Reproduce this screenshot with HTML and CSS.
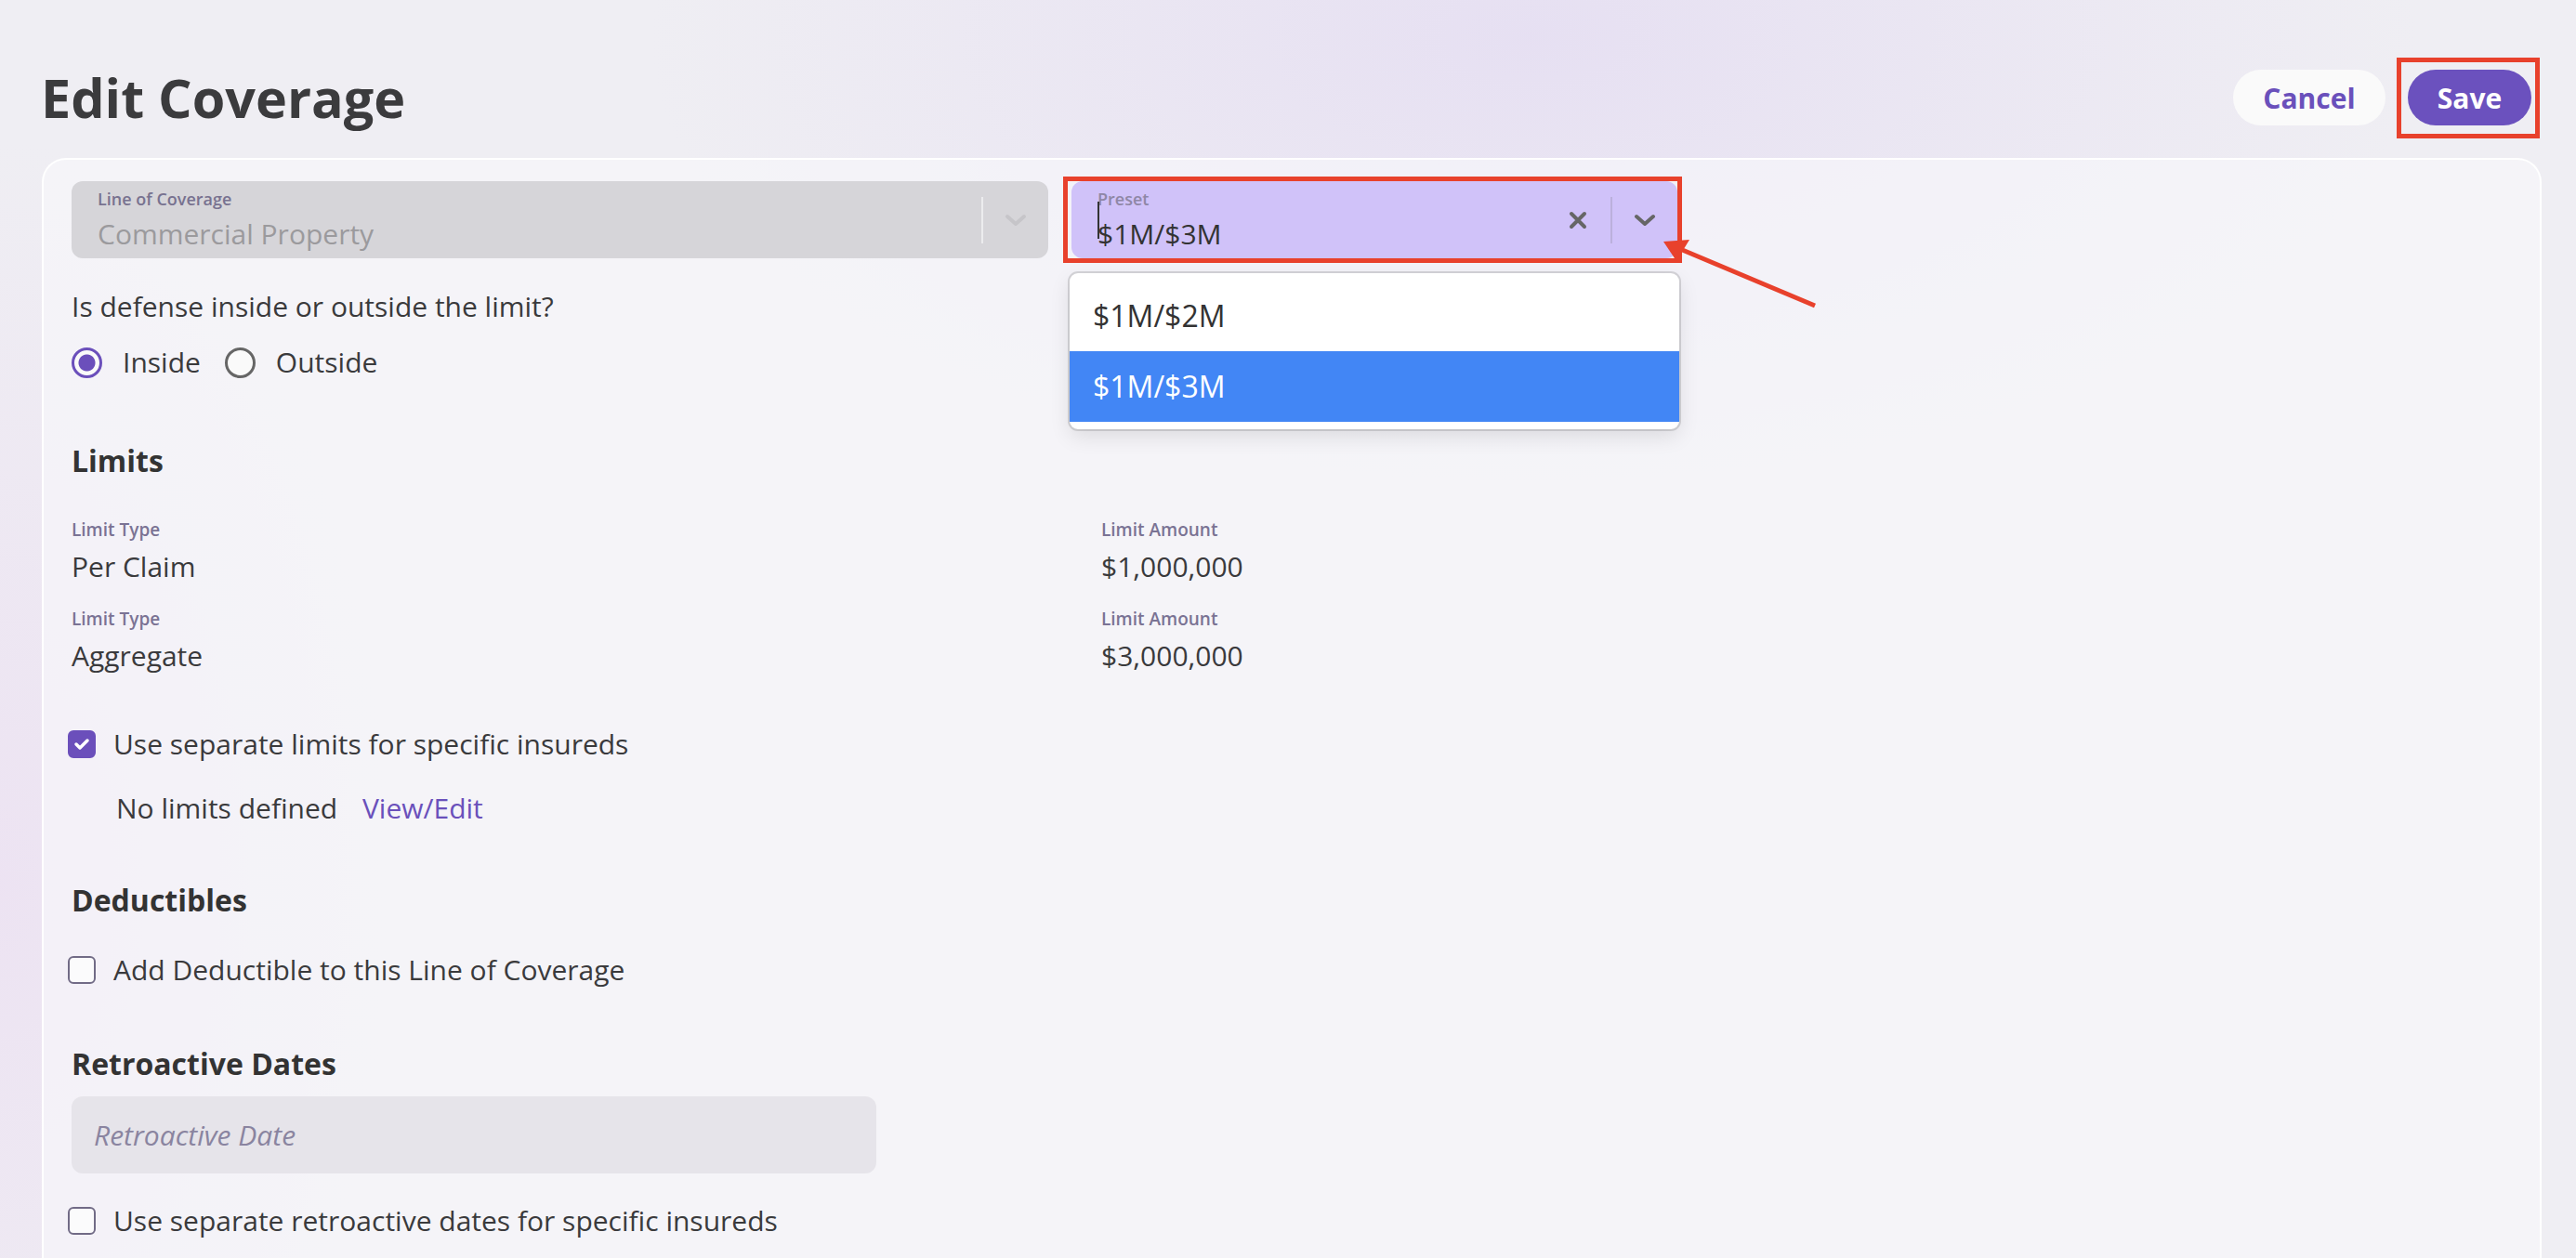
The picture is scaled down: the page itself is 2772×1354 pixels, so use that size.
FILE: index.html
```html
<!DOCTYPE html>
<html lang="en">

<head>
    <meta charset="UTF-8">
    <meta name="viewport" content="width=device-width, initial-scale=1.0">
    <title>Edit Coverage</title>
    <link rel="stylesheet" href="styles.css">
</head>

<body>
    <header class="page-head">
        <h1>Edit Coverage</h1>
        <div class="actions">
            <button class="btn btn-light">Cancel</button>
            <button class="btn btn-primary marked-save">Save</button>
        </div>
    </header>

    <main class="card">
        <div class="select-row">
            <div class="select select-disabled">
                <div class="select-text">
                    <span class="select-label">Line of Coverage</span>
                    <span class="select-value">Commercial Property</span>
                </div>
                <div class="indicators">
                    <span class="sep"></span>
                    <span class="ind">
                        <svg width="24" height="14" viewBox="0 0 24 14">
                            <path d="M3 3 L12 11 L21 3" fill="none" stroke="currentColor" stroke-width="4" stroke-linecap="round" stroke-linejoin="round" />
                        </svg>
                    </span>
                </div>
            </div>

            <div class="select-wrap">
                <div class="select select-preset marked-preset">
                    <div class="select-text">
                        <span class="caret"></span>
                        <span class="select-label">Preset</span>
                        <span class="select-value">$1M/$3M</span>
                    </div>
                    <div class="indicators">
                        <span class="ind">
                            <svg width="20" height="20" viewBox="0 0 20 20">
                                <path d="M3 3 L17 17 M17 3 L3 17" fill="none" stroke="currentColor" stroke-width="4" stroke-linecap="round" />
                            </svg>
                        </span>
                        <span class="sep"></span>
                        <span class="ind">
                            <svg width="24" height="14" viewBox="0 0 24 14">
                                <path d="M3 3 L12 11 L21 3" fill="none" stroke="currentColor" stroke-width="4" stroke-linecap="round" stroke-linejoin="round" />
                            </svg>
                        </span>
                    </div>
                </div>
                <ul class="menu">
                    <li class="option">$1M/$2M</li>
                    <li class="option option-active">$1M/$3M</li>
                </ul>
            </div>
        </div>

        <p class="question">Is defense inside or outside the limit?</p>
        <div class="radios">
            <label class="radio"><span class="ring ring-on"></span>Inside</label>
            <label class="radio"><span class="ring"></span>Outside</label>
        </div>

        <h2 class="section-title limits-title">Limits</h2>
        <div class="limits-grid">
            <div class="field">
                <span class="field-label">Limit Type</span>
                <span class="field-value">Per Claim</span>
            </div>
            <div class="field">
                <span class="field-label">Limit Amount</span>
                <span class="field-value">$1,000,000</span>
            </div>
            <div class="field">
                <span class="field-label">Limit Type</span>
                <span class="field-value">Aggregate</span>
            </div>
            <div class="field">
                <span class="field-label">Limit Amount</span>
                <span class="field-value">$3,000,000</span>
            </div>
        </div>

        <label class="check check-limits">
            <span class="box box-on">
                <svg width="18" height="14" viewBox="0 0 18 14">
                    <path d="M3 7 L7 11 L15 3" fill="none" stroke="#fff" stroke-width="3.5" stroke-linecap="round" stroke-linejoin="round" />
                </svg>
            </span>
            Use separate limits for specific insureds
        </label>
        <div class="no-limits">No limits defined <a href="#" class="link">View/Edit</a></div>

        <h2 class="section-title deduct-title">Deductibles</h2>
        <label class="check check-deduct"><span class="box"></span>Add Deductible to this Line of Coverage</label>

        <h2 class="section-title retro-title">Retroactive Dates</h2>
        <div class="date-input">Retroactive Date</div>
        <label class="check check-retro"><span class="box"></span>Use separate retroactive dates for specific insureds</label>
    </main>

    <svg class="arrow" width="200" height="110" viewBox="0 0 200 110">
        <line x1="38" y1="28" x2="183" y2="89" stroke="#e8412c" stroke-width="5" />
        <polygon points="20,20 48,18 34,41" fill="#e8412c" />
    </svg>
</body>

</html>
```

FILE: styles.css
```css
* {
    margin: 0;
    padding: 0;
    box-sizing: border-box;
}

body {
    position: relative;
    min-height: 100vh;
    font-family: "Open Sans", sans-serif;
    color: #3a3a3c;
    background:
        radial-gradient(ellipse 950px 480px at 1650px 40px, rgba(228, 220, 242, 0.8), rgba(228, 220, 242, 0)),
        radial-gradient(ellipse 420px 800px at 0 950px, rgba(236, 224, 242, 0.8), rgba(236, 224, 242, 0)),
        #efeef3;
    overflow: hidden;
}

.page-head {
    display: flex;
    justify-content: space-between;
    align-items: center;
    padding: 69px 48px 0 44px;
}

h1 {
    font-size: 57.5px;
    line-height: 72px;
    font-weight: 700;
    color: #3b3b3d;
}

.actions {
    display: flex;
    gap: 24px;
}

.btn {
    height: 60px;
    border: none;
    border-radius: 30px;
    font-family: "Open Sans", sans-serif;
    font-size: 30px;
    font-weight: 700;
    cursor: pointer;
}

.btn-light {
    width: 164px;
    background-color: #fafafa;
    color: #6a50bb;
}

.btn-primary {
    width: 133px;
    background-color: #6b51be;
    color: #fff;
}

.marked-save,
.marked-preset {
    position: relative;
}

.marked-save::after {
    content: "";
    position: absolute;
    top: -13px;
    left: -12px;
    right: -9px;
    bottom: -14px;
    border: 5px solid #e8412c;
}

.marked-preset::after {
    content: "";
    position: absolute;
    top: -5px;
    left: -9px;
    right: -5px;
    bottom: -5px;
    border: 5px solid #e8412c;
}

.card {
    margin: 29px 37px 0 45px;
    min-height: 1300px;
    padding: 23px 30px;
    border: 2px solid rgba(255, 255, 255, 0.9);
    border-radius: 26px;
    background-color: rgba(248, 247, 251, 0.65);
}

.select-row {
    display: grid;
    grid-template-columns: 1051px 652px;
    gap: 25px;
}

.select-wrap {
    position: relative;
}

.select {
    display: flex;
    height: 83px;
    border-radius: 12px;
}

.select-disabled {
    background-color: #d6d5d9;
}

.select-preset {
    background-color: #d0c2f9;
}

.select-text {
    position: relative;
    flex: 1;
    display: flex;
    flex-direction: column;
    gap: 6px;
    padding: 8px 0 0 28px;
}

.select-label {
    font-size: 18px;
    line-height: 23px;
    font-weight: 600;
    color: #787290;
}

.select-preset .select-label {
    color: #8f87a6;
}

.select-value {
    font-size: 30px;
    line-height: 40px;
}

.select-disabled .select-value {
    color: #9b9a9d;
}

.select-preset .select-value {
    color: #333;
}

.caret {
    position: absolute;
    left: 28px;
    top: 22px;
    width: 2px;
    height: 40px;
    background-color: #333;
}

.indicators {
    display: flex;
    align-items: center;
}

.sep {
    width: 2px;
    height: 50px;
}

.select-disabled .sep {
    background-color: #ececee;
}

.select-preset .sep {
    background-color: #bbb0dc;
}

.ind {
    display: flex;
    align-items: center;
    justify-content: center;
    width: 70px;
    height: 100%;
}

.select-disabled .ind {
    color: #c6c5c9;
}

.select-preset .ind {
    color: #666;
}

.menu {
    position: absolute;
    top: 99px;
    left: -2px;
    right: -2px;
    z-index: 2;
    list-style: none;
    padding: 8px 0;
    border-radius: 9px;
    background-color: #fff;
    box-shadow: 0 0 0 2px rgba(0, 0, 0, 0.13), 0 8px 22px rgba(0, 0, 0, 0.1);
}

.option {
    height: 76px;
    padding: 0 25px;
    font-size: 32px;
    line-height: 76px;
    color: #333;
}

.option-active {
    background-color: #4286f5;
    color: #fff;
}

.question {
    margin-top: 30px;
    font-size: 30px;
    line-height: 44px;
}

.radios {
    display: flex;
    margin-top: 16px;
    height: 44px;
}

.radio {
    display: flex;
    align-items: center;
    font-size: 30px;
    line-height: 44px;
    margin-right: 26px;
}

.ring {
    width: 33px;
    height: 33px;
    margin-right: 22px;
    border: 3px solid #666;
    border-radius: 50%;
    background-color: #fafafa;
}

.ring-on {
    border-color: #6b4fbb;
    background: radial-gradient(circle, #6b4fbb 0 8.5px, #fafafa 9.5px);
}

.section-title {
    font-size: 32px;
    line-height: 44px;
    font-weight: 700;
    color: #333;
}

.limits-title {
    margin-top: 62px;
}

.limits-grid {
    display: grid;
    grid-template-columns: 1108px 1fr;
    row-gap: 22px;
    margin-top: 40px;
}

.field {
    display: flex;
    flex-direction: column;
    gap: 6px;
}

.field-label {
    font-size: 19px;
    line-height: 24px;
    font-weight: 600;
    color: #7a7394;
}

.field-value {
    font-size: 30px;
    line-height: 44px;
}

.check {
    display: flex;
    align-items: center;
    margin-left: -4px;
    font-size: 30px;
    line-height: 44px;
}

.box {
    display: flex;
    align-items: center;
    justify-content: center;
    width: 30px;
    height: 30px;
    margin-right: 19px;
    border: 2px solid #716b86;
    border-radius: 6px;
    background-color: #fbfbfc;
}

.box-on {
    border-color: #6b4fbb;
    background-color: #6b4fbb;
}

.check-limits {
    margin-top: 51px;
}

.no-limits {
    margin-top: 25px;
    padding-left: 48px;
    font-size: 30px;
    line-height: 44px;
}

.link {
    margin-left: 19px;
    color: #6a50bb;
    text-decoration: none;
}

.deduct-title {
    margin-top: 55px;
}

.check-deduct {
    margin-top: 31px;
}

.retro-title {
    margin-top: 57px;
}

.date-input {
    width: 866px;
    height: 83px;
    margin-top: 13px;
    padding-left: 24px;
    border-radius: 12px;
    background-color: #e6e4ea;
    font-size: 30px;
    line-height: 83px;
    font-style: italic;
    color: #8a84a0;
}

.check-retro {
    margin-top: 29px;
}

.arrow {
    position: absolute;
    left: 1770px;
    top: 240px;
}
```
